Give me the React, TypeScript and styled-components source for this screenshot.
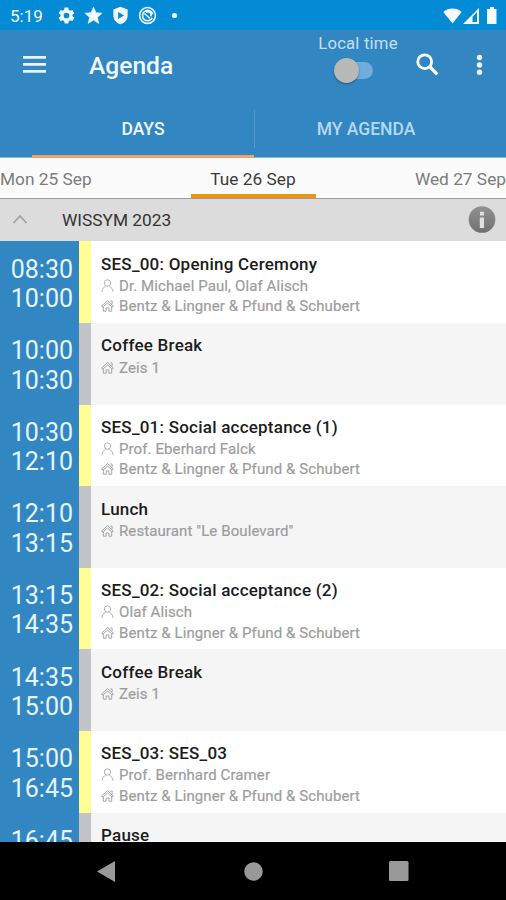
import React from "react";
import styled, { createGlobalStyle } from "styled-components";

const Global = createGlobalStyle`
  * { box-sizing: border-box; }
  body { margin: 0; font-family: Roboto, "Liberation Sans", sans-serif; }
`;

const Screen = styled.div`
  width: 506px;
  height: 900px;
  display: flex;
  flex-direction: column;
  overflow: hidden;
  background: #fff;
`;

const StatusBar = styled.header`
  flex: none;
  height: 30px;
  padding: 1px 8px 0 10px;
  display: flex;
  align-items: center;
  justify-content: space-between;
  background: #038bd5;
  color: #f4faff;
`;

const StatusGroup = styled.div<{ $gap: number }>`
  display: flex;
  align-items: center;
  gap: ${(p) => p.$gap}px;
`;

const Clock = styled.span`
  font-size: 17px;
  line-height: 20px;
  width: 39px;
`;

const Icon = styled.svg`
  display: block;
  flex: none;
`;

const AppBar = styled.div`
  flex: none;
  height: 70px;
  display: flex;
  align-items: center;
  padding: 0 23px 0 23px;
  background: #3286c1;
  color: #fff;
`;

const Title = styled.h1`
  margin: 2px 0 0 43px;
  font-size: 24.6px;
  line-height: 30px;
  font-weight: 500;
  color: #eff8ff;
  flex: 1;
`;

const LocalTime = styled.div`
  width: 80px;
  height: 70px;
  padding-top: 4px;
  margin-right: 18px;
  display: flex;
  flex-direction: column;
  align-items: center;
  font-size: 16.7px;
  line-height: 19px;
  letter-spacing: 0.2px;
  white-space: nowrap;
  color: #c4dff3;
`;

const Track = styled.div`
  width: 27px;
  height: 17px;
  margin: 9px 0 0 2px;
  display: flex;
  align-items: center;
  background: #71acda;
  border-radius: 9px;
`;

const Thumb = styled.div`
  flex: none;
  width: 25px;
  height: 25px;
  margin-left: -12px;
  border-radius: 50%;
  background: #b9b9b9;
  box-shadow: 0 1px 2px rgba(0, 0, 0, 0.35);
`;

const Actions = styled.div`
  display: flex;
  align-items: center;
  gap: 37px;
  margin-top: -2px;
`;

const Tabs = styled.nav`
  flex: none;
  height: 58px;
  display: flex;
  padding-left: 32px;
  background: #3286c1;
  border-bottom: 1px solid #8bb5d6;
`;

const Tab = styled.div<{ $active?: boolean }>`
  width: 222px;
  flex: none;
  display: flex;
  align-items: center;
  justify-content: center;
  font-size: 17.5px;
  font-weight: 500;
  color: ${(p) => (p.$active ? "#f0f8ff" : "#b5d8f2")};
  border-bottom: 3px solid ${(p) => (p.$active ? "#f3a26c" : "transparent")};
  margin-bottom: -1px;
  padding-top: 3px;
`;

const Divider = styled.i`
  width: 1px;
  height: 38px;
  margin-top: 10px;
  background: #5299cd;
`;

const Days = styled.div`
  flex: none;
  height: 41px;
  display: flex;
  justify-content: space-between;
  background: #fbfbfb;
  border-bottom: 1px solid #9a9a9a;
`;

const Day = styled.div<{ $active?: boolean }>`
  width: 125px;
  height: 40px;
  padding-top: 10px;
  font-size: 17.3px;
  line-height: 22px;
  white-space: nowrap;
  text-align: center;
  color: ${(p) => (p.$active ? "#3b3b3b" : "#7c7c7c")};
  border-bottom: 4px solid ${(p) => (p.$active ? "#ec9410" : "transparent")};
  &:first-child { text-align: left; }
  &:last-child { text-align: right; }
`;

const Section = styled.div`
  flex: none;
  height: 42.4px;
  display: flex;
  align-items: center;
  padding: 0 10px 0 12px;
  background: #dcdcdc;
  color: #333;
  font-size: 17.3px;
`;

const SectionName = styled.span`
  flex: 1;
  margin-left: 34px;
`;

const List = styled.main`
  flex: 1;
  min-height: 0;
  overflow: hidden;
  background: #fff;
`;

const Row = styled.article<{ $pause: boolean }>`
  height: 81.6px;
  display: flex;
  background: ${(p) => (p.$pause ? "#f5f5f5" : "#fff")};
`;

const Times = styled.div`
  width: 79px;
  padding: 13.3px 6px 0 0;
  text-align: right;
  background: #3286c1;
  color: #e6f5ff;
  font-size: 25px;
  line-height: 29.4px;
`;

const Stripe = styled.div<{ $pause: boolean }>`
  width: 12px;
  background: ${(p) => (p.$pause ? "#c2c3c9" : "#fffe96")};
`;

const Details = styled.div`
  padding: 12.4px 0 0 10px;
  white-space: nowrap;
`;

const SessionName = styled.h2`
  margin: 0;
  font-size: 17px;
  line-height: 21px;
  font-weight: 500;
  letter-spacing: 0.23px;
  color: #1c1c1c;
`;

const Meta = styled.div`
  height: 20.3px;
  display: flex;
  align-items: center;
  gap: 5px;
  font-size: 15px;
  letter-spacing: 0.1px;
  color: #9d9d9d;
  -webkit-text-stroke: 0.2px #9d9d9d;
  padding-top: 2px;
`;

const NavBar = styled.footer`
  flex: none;
  height: 58px;
  display: flex;
  align-items: center;
  justify-content: space-between;
  padding: 0 97px 0 97px;
  background: #000;
`;

const PersonIcon = () => (
  <Icon width="13" height="14" viewBox="0 0 13 14" fill="none" stroke="#b0b0b0" strokeWidth="1">
    <circle cx="6.5" cy="4" r="3.2" />
    <path d="M1 12.8c.2-3 1.6-4.400 3.600-5.300M12 12.800c-.2-3-1.600-4.400-3.600-5.300" />
  </Icon>
);

const HouseIcon = () => (
  <Icon width="13" height="14" viewBox="0 0 13 14" fill="none" stroke="#a5a5a5" strokeWidth="1">
    <path d="M2.300 8.300.6 7.200 6.500 1.500l5.900 5.700-1.700 1.100M2.300 7.700 6.500 4l4.200 3.700M2.300 7.500v4.700h2.800V9h2.800v3.200h2.800V7.500M9.300 2h1.800v3.200" />
  </Icon>
);

type Session = { start: string; end: string; name: string; people?: string; place?: string };

const hall = "Bentz & Lingner & Pfund & Schubert";
const sessions: Session[] = [
  { start: "08:30", end: "10:00", name: "SES_00: Opening Ceremony", people: "Dr. Michael Paul, Olaf Alisch", place: hall },
  { start: "10:00", end: "10:30", name: "Coffee Break", place: "Zeis 1" },
  { start: "10:30", end: "12:10", name: "SES_01: Social acceptance (1)", people: "Prof. Eberhard Falck", place: hall },
  { start: "12:10", end: "13:15", name: "Lunch", place: 'Restaurant "Le Boulevard"' },
  { start: "13:15", end: "14:35", name: "SES_02: Social acceptance (2)", people: "Olaf Alisch", place: hall },
  { start: "14:35", end: "15:00", name: "Coffee Break", place: "Zeis 1" },
  { start: "15:00", end: "16:45", name: "SES_03: SES_03", people: "Prof. Bernhard Cramer", place: hall },
  { start: "16:45", end: "", name: "Pause" },
];

const SessionRow = ({ s }: { s: Session }) => {
  const pause = !s.people;
  return (
    <Row $pause={pause}>
      <Times>
        <div>{s.start}</div>
        <div>{s.end}</div>
      </Times>
      <Stripe $pause={pause} />
      <Details>
        <SessionName>{s.name}</SessionName>
        {s.people && <Meta><PersonIcon />{s.people}</Meta>}
        {s.place && <Meta><HouseIcon />{s.place}</Meta>}
      </Details>
    </Row>
  );
};

export default function App() {
  return (
    <Screen>
      <Global />
      <StatusBar>
        <StatusGroup $gap={8}>
          <Clock>5:19</Clock>
          <Icon width="19" height="19" viewBox="0 0 24 24" fill="currentColor">
            <path d="M19.4 13a7.5 7.5 0 0 0 0-2l2.1-1.6a.5.5 0 0 0 .1-.7l-2-3.4a.5.5 0 0 0-.6-.2l-2.5 1a7.3 7.3 0 0 0-1.7-1L14.4 2.4a.5.5 0 0 0-.5-.4h-4a.5.5 0 0 0-.5.4L9 5.1a7.700 7.700 0 0 0-1.700 1l-2.500-1a.5.5 0 0 0-.6.2l-2 3.400a.5.5 0 0 0 .1.700L4.500 11a7.900 7.900 0 0 0 0 2l-2.100 1.600a.5.5 0 0 0-.1.700l2 3.400c.1.200.4.300.6.200l2.500-1c.5.4 1.100.7 1.700 1l.4 2.700c0 .2.2.4.5.4h4c.2 0 .5-.2.5-.4l.4-2.700a7.300 7.300 0 0 0 1.700-1l2.500 1c.2.1.5 0 .6-.2l2-3.400a.5.5 0 0 0-.1-.7zM12 15.600a3.600 3.600 0 1 1 0-7.200 3.600 3.600 0 0 1 0 7.200z" />
          </Icon>
          <Icon width="19" height="19" viewBox="0 0 24 24" fill="currentColor" stroke="currentColor" strokeWidth="0.8">
            <path d="M12 17.800 18.700 22l-1.800-7.700 6-5.200-7.900-.7L12 1.200 9 8.400l-7.900.7 6 5.200L5.300 22z" />
          </Icon>
          <Icon width="19" height="19" viewBox="0 0 24 24" fill="currentColor" fillRule="evenodd">
            <path d="M12 1 21 4.500V12c0 5.500-3.800 9.700-9 11-5.200-1.300-9-5.500-9-11V4.500zM9 7.500v9l7.500-4.500z" />
          </Icon>
          <Icon width="19" height="19" viewBox="0 0 24 24" fill="none" stroke="currentColor" strokeWidth="2">
            <circle cx="12" cy="12" r="10" />
            <path d="M18 15a6.500 6.500 0 1 1 .5-4.500M8 9.500l7 6M10 8a4 4 0 0 1 6 5" />
          </Icon>
          <Icon width="19" height="19" viewBox="0 0 19 19" fill="currentColor">
            <circle cx="9.500" cy="9.500" r="2.600" />
          </Icon>
        </StatusGroup>
        <StatusGroup $gap={1}>
          <Icon width="19" height="16" viewBox="0 0 19 16" fill="currentColor">
            <path d="M.3 4C5.300-.6 13.700-.6 18.700 4L9.500 15.500z" />
          </Icon>
          <Icon width="17" height="16" viewBox="0 0 17 16" fill="currentColor" fillRule="evenodd">
            <path d="M0 16 16 0v16zM9.500 8.800V14H14V4.300z" />
          </Icon>
          <Icon width="17" height="17" viewBox="0 0 17 17" fill="currentColor">
            <path d="M9 0h4v2h2.500v15H6V2h3z" />
          </Icon>
        </StatusGroup>
      </StatusBar>
      <AppBar>
        <Icon width="23" height="18" viewBox="0 0 23 18" stroke="#e6f5ff" strokeWidth="2.800">
          <path d="M0 1.400h23M0 8.400h23M0 15.400h23" />
        </Icon>
        <Title>Agenda</Title>
        <LocalTime>
          Local time
          <Track><Thumb /></Track>
        </LocalTime>
        <Actions>
          <Icon width="23" height="23" viewBox="0 0 23 23" fill="none" stroke="#fff" strokeWidth="2.800">
            <circle cx="8.700" cy="8.700" r="6.900" />
            <path d="m13.500 13.500 7.800 7.800" strokeWidth="3.200" />
          </Icon>
          <Icon width="7" height="21" viewBox="0 0 7 21" fill="#eef8ff">
            <circle cx="3.500" cy="3.500" r="2.700" />
            <circle cx="3.500" cy="11" r="2.700" />
            <circle cx="3.500" cy="18.200" r="2.700" />
          </Icon>
        </Actions>
      </AppBar>
      <Tabs>
        <Tab $active>DAYS</Tab>
        <Divider />
        <Tab>MY AGENDA</Tab>
      </Tabs>
      <Days>
        <Day>Mon 25 Sep</Day>
        <Day $active>Tue 26 Sep</Day>
        <Day>Wed 27 Sep</Day>
      </Days>
      <Section>
        <Icon width="16" height="12" viewBox="0 0 16 12" fill="none" stroke="#a0a0a0" strokeWidth="1.800">
          <path d="m1.500 9 6.500-7 6.500 7" />
        </Icon>
        <SectionName>WISSYM 2023</SectionName>
        <Icon width="28" height="28" viewBox="0 0 28 28">
          <defs>
            <linearGradient id="badge" x1="0" y1="0" x2="0" y2="1">
              <stop offset="0" stopColor="#929292" />
              <stop offset="1" stopColor="#707070" />
            </linearGradient>
          </defs>
          <circle cx="14" cy="13.500" r="13.300" fill="url(#badge)" />
          <path d="M12 5.800h4v3.800h-4zM11.800 11.500H16V22h-4.200z" fill="#e0e0e0" />
        </Icon>
      </Section>
      <List>
        {sessions.map((s) => <SessionRow key={s.start} s={s} />)}
      </List>
      <NavBar>
        <Icon width="18" height="21" viewBox="0 0 18 21" fill="#999"><path d="M0 10.500 18 0v21z" /></Icon>
        <Icon width="21" height="19" viewBox="0 0 21 19" fill="#999"><circle cx="11.500" cy="9.500" r="9.300" /></Icon>
        <Icon width="20" height="20" viewBox="0 0 20 20" fill="#999"><rect width="19.500" height="20" rx="1.500" /></Icon>
      </NavBar>
    </Screen>
  );
}
